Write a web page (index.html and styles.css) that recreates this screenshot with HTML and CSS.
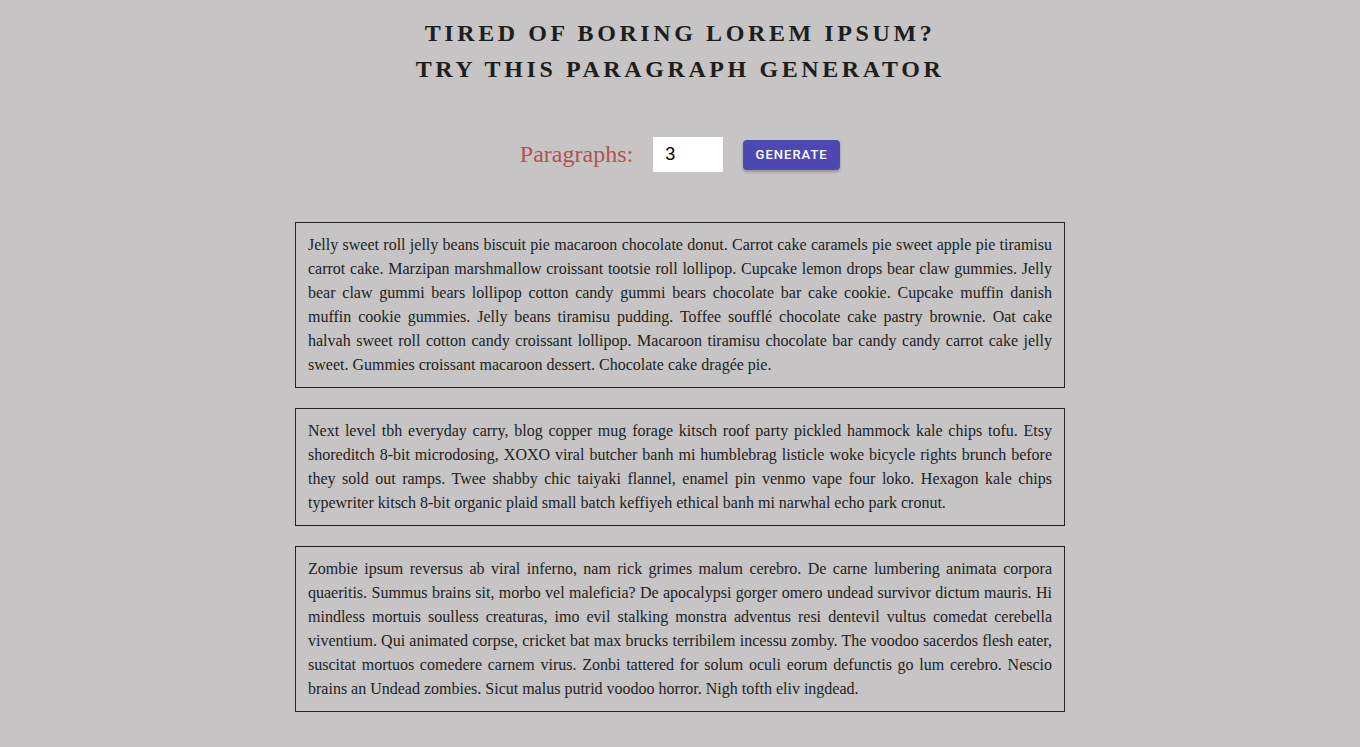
FILE: index.html
```html
<!DOCTYPE html>
<html>
<head>
<meta charset="utf-8">
<link rel="stylesheet" href="styles.css">
</head>
<body>
<main class="app">
  <h1 class="title">Tired of boring lorem ipsum?<br>Try this paragraph generator</h1>
  <form class="controls">
    <label class="label" for="amount">Paragraphs:</label>
    <input class="amount" id="amount" type="number" value="3">
    <button class="btn" type="button">Generate</button>
  </form>
  <section class="results">
    <p class="para">Jelly sweet roll jelly beans biscuit pie macaroon chocolate donut. Carrot cake caramels pie sweet apple pie tiramisu carrot cake. Marzipan marshmallow croissant tootsie roll lollipop. Cupcake lemon drops bear claw gummies. Jelly bear claw gummi bears lollipop cotton candy gummi bears chocolate bar cake cookie. Cupcake muffin danish muffin cookie gummies. Jelly beans tiramisu pudding. Toffee soufflé chocolate cake pastry brownie. Oat cake halvah sweet roll cotton candy croissant lollipop. Macaroon tiramisu chocolate bar candy candy carrot cake jelly sweet. Gummies croissant macaroon dessert. Chocolate cake dragée pie.</p>
    <p class="para">Next level tbh everyday carry, blog copper mug forage kitsch roof party pickled hammock kale chips tofu. Etsy shoreditch 8-bit microdosing, XOXO viral butcher banh mi humblebrag listicle woke bicycle rights brunch before they sold out ramps. Twee shabby chic taiyaki flannel, enamel pin venmo vape four loko. Hexagon kale chips typewriter kitsch 8-bit organic plaid small batch keffiyeh ethical banh mi narwhal echo park cronut.</p>
    <p class="para">Zombie ipsum reversus ab viral inferno, nam rick grimes malum cerebro. De carne lumbering animata corpora quaeritis. Summus brains sit, morbo vel maleficia? De apocalypsi gorger omero undead survivor dictum mauris. Hi mindless mortuis soulless creaturas, imo evil stalking monstra adventus resi dentevil vultus comedat cerebella viventium. Qui animated corpse, cricket bat max brucks terribilem incessu zomby. The voodoo sacerdos flesh eater, suscitat mortuos comedere carnem virus. Zonbi tattered for solum oculi eorum defunctis go lum cerebro. Nescio brains an Undead zombies. Sicut malus putrid voodoo horror. Nigh tofth eliv ingdead.</p>
  </section>
</main>
</body>
</html>
```

FILE: styles.css
```css
html, body {
  margin: 0;
  padding: 0;
}
body {
  background: #c6c4c4;
  font-family: "Liberation Serif", "Times New Roman", serif;
  color: #222;
}
.app {
  width: 770px;
  margin: 0 auto;
  padding-top: 15px;
}
.title {
  margin: 0;
  text-align: center;
  text-transform: uppercase;
  font-size: 24px;
  line-height: 36px;
  letter-spacing: 3.6px;
  font-weight: bold;
  color: #1e1e1e;
}
.controls {
  display: flex;
  align-items: center;
  justify-content: center;
  gap: 20px;
  margin-top: 50px;
}
.label {
  font-size: 24px;
  color: #b5514f;
}
.amount {
  width: 70px;
  height: 35px;
  box-sizing: border-box;
  border: none;
  background: #fff;
  padding: 0 12px;
  font-family: "Liberation Sans", Arial, sans-serif;
  font-size: 18px;
  color: #000;
  outline: none;
  -moz-appearance: textfield;
}
.amount::-webkit-inner-spin-button,
.amount::-webkit-outer-spin-button {
  -webkit-appearance: none;
  margin: 0;
}
.btn {
  width: 97px;
  height: 30px;
  border: none;
  border-radius: 4px;
  background: #4d48b3;
  color: #fff;
  font-family: Roboto, "Liberation Sans", sans-serif;
  font-weight: 500;
  font-size: 13px;
  letter-spacing: 1px;
  text-transform: uppercase;
  box-shadow: 0 2px 3px rgba(0,0,0,0.25);
  cursor: pointer;
  padding: 0;
}
.results {
  margin-top: 50px;
  display: flex;
  flex-direction: column;
  gap: 20px;
}
.para {
  margin: 0;
  border: 1px solid #222;
  padding: 10px 12px;
  font-size: 16px;
  line-height: 24px;
  text-align: justify;
  color: #222;
}
```
